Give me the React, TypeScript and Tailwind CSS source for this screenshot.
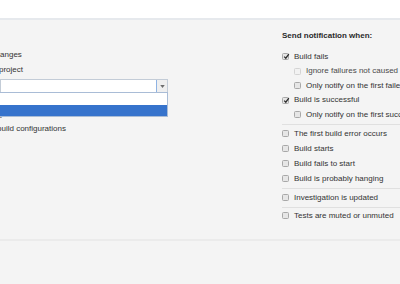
import React from "react";

function Box({ checked = false, disabled = false }: { checked?: boolean; disabled?: boolean }) {
  return (
    <span
      className={
        "relative inline-block w-[7px] h-[7px] shrink-0 rounded-[1.5px] border " +
        (disabled ? "border-[#d4d4d4] bg-[#f2f2f2]" : "border-[#a8a8a8] bg-[#e6e6e6]")
      }
    >
      {checked && (
        <svg viewBox="0 0 7 7" className="absolute left-[0px] top-[-1px] w-[7px] h-[7px]">
          <path d="M1.2 3.6 L2.8 5.2 L5.8 1.2" fill="none" stroke="#2b2b2b" strokeWidth="1.3" />
        </svg>
      )}
    </span>
  );
}

function Row({
  label,
  checked,
  indent,
  disabled,
  h = "h-[14.5px]",
}: {
  label: string;
  checked?: boolean;
  indent?: boolean;
  disabled?: boolean;
  h?: string;
}) {
  return (
    <div className={"flex items-center whitespace-nowrap " + h + (indent ? " pl-[12px]" : "")}>
      <Box checked={checked} disabled={disabled} />
      <span className={"ml-[5px] " + (disabled ? "text-[#4a4a4a]" : "text-[#333]")}>{label}</span>
    </div>
  );
}

function Sep({ mb = "mb-[1px]" }: { mb?: string }) {
  return <div className={"h-px bg-[#e0e0e0] mt-[2px] -mr-[20px] " + mb} />;
}

export default function App() {
  return (
    <div
      className="w-[400px] h-[284px] overflow-hidden bg-[#f4f4f4] text-[8px] leading-[12px] text-[#333]"
      style={{ fontFamily: '"Liberation Sans", Arial, sans-serif' }}
    >
      <div className="h-[20px] bg-white border-b-[2px] border-[#e6e9ed]" />
      <div className="h-[221px] border-b-[2px] border-[#ebebeb] flex">
        {/* left column */}
        <div className="relative w-[281px] shrink-0 pt-[27.5px]">
          <div className="h-[15px] flex items-center whitespace-nowrap">
            <span className="ml-[-8.4px]">changes</span>
          </div>
          <div className="h-[15px] flex items-center whitespace-nowrap">
            <span className="ml-[-1px]">project</span>
          </div>
          <div className="mt-[1.5px] h-[14px] w-[168px] flex border border-[#c3ccd7] bg-white">
            <div className="flex-1 border-r border-[#8fb3e3]" />
            <div className="w-[10px] bg-[#efefef] flex items-center justify-center">
              <svg viewBox="0 0 6 4" className="w-[5px] h-[3px]">
                <path d="M0 0 L6 0 L3 4 Z" fill="#6d6d6d" />
              </svg>
            </div>
          </div>
          <div className="relative">
            <div className="absolute left-[-2px] top-[-1px] w-[170px] h-[25px] border border-[#a9bcd6] bg-white z-10 flex flex-col">
              <div className="h-[12px]" />
              <div className="h-[11px] bg-[#3673cc]" />
            </div>
          </div>
          <div className="mt-[13px] h-[15px] flex items-center whitespace-nowrap">
            <span className="ml-[-2px]">ly</span>
          </div>
          <div className="h-[15px] flex items-center whitespace-nowrap">
            <span className="ml-[-3px]">build configurations</span>
          </div>
        </div>

        {/* right column */}
        <div className="flex-1 pt-[10px] pl-[1px]">
          <div className="font-bold text-[#2a2a2a] whitespace-nowrap h-[12px]">Send notification when:</div>
          <div className="mt-[7.5px]">
            <Row label="Build fails" checked />
            <Row label="Ignore failures not caused by my changes" indent disabled />
            <Row label="Only notify on the first failed build" indent />
            <Row label="Build is successful" checked />
            <Row label="Only notify on the first successful build" indent />
          </div>
          <Sep />
          <Row label="The first build error occurs" h="h-[15px]" />
          <Row label="Build starts" h="h-[15px]" />
          <Row label="Build fails to start" h="h-[15px]" />
          <Row label="Build is probably hanging" h="h-[15px]" />
          <Sep />
          <Row label="Investigation is updated" h="h-[15px]" />
          <Sep mb="mb-0" />
          <Row label="Tests are muted or unmuted" h="h-[15px]" />
        </div>
      </div>
    </div>
  );
}
